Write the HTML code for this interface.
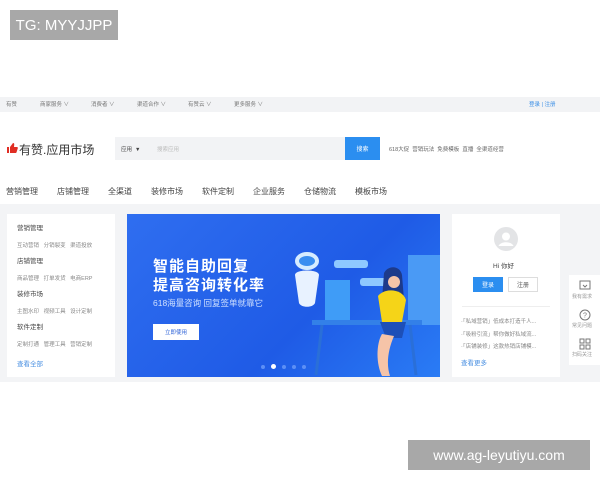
<!DOCTYPE html>
<html><head><meta charset="utf-8"><style>
*{margin:0;padding:0;box-sizing:border-box}
body{width:600px;height:480px;background:#fff;position:relative;overflow:hidden;font-family:"Liberation Sans","Noto Sans CJK SC",sans-serif;color:#333}
.a{position:absolute}
.wm{background:#a8a8a8;color:#fff;font-size:15px;display:flex;align-items:center;justify-content:center}
.s{font-size:5.5px;color:#666;white-space:nowrap}
</style></head><body>
<div class="a wm" style="left:10px;top:10px;width:108px;height:30px">TG: MYYJJPP</div>

<div class="a" style="left:0;top:97px;width:600px;height:15px;background:#f2f3f5"></div>
<div class="a s" style="left:6px;top:100px;color:#777">有赞</div>
<div class="a s" style="left:40px;top:100px;color:#777">商家服务 ∨</div>
<div class="a s" style="left:91px;top:100px;color:#777">消费者 ∨</div>
<div class="a s" style="left:137px;top:100px;color:#777">渠道合作 ∨</div>
<div class="a s" style="left:188px;top:100px;color:#777">有赞云 ∨</div>
<div class="a s" style="left:234px;top:100px;color:#777">更多服务 ∨</div>
<div class="a s" style="left:529px;top:100px;color:#3a8ee6">登录 | 注册</div>

<svg class="a" style="left:6px;top:142px" width="12" height="12" viewBox="0 0 12 12"><path d="M1 5h2v6H1zM4 5l3-4c1 0 1.5.6 1.2 2L8 5h3c.6 0 1 .6.8 1.2l-1.3 4.2c-.2.4-.5.6-1 .6H4z" fill="#e02e24"/></svg>
<div class="a" style="left:19px;top:141px;font-size:12px;color:#333">有赞.应用市场</div>
<div class="a" style="left:115px;top:137px;width:230px;height:23px;background:#f2f3f5"></div>
<div class="a s" style="left:121px;top:145px;color:#444">应用 &nbsp;▼</div>
<div class="a s" style="left:157px;top:145px;color:#bbb">搜索应用</div>
<div class="a" style="left:345px;top:137px;width:35px;height:23px;background:#2b8ef0;color:#fff;font-size:6px;display:flex;align-items:center;justify-content:center">搜索</div>
<div class="a s" style="left:389px;top:145px">618大促 &nbsp;营销玩法 &nbsp;免费模板 &nbsp;直播 &nbsp;全渠道经营</div>

<div class="a" style="left:6px;top:186px;font-size:8px;color:#444;white-space:nowrap">营销管理<span style="margin-left:19px">店铺管理</span><span style="margin-left:19px">全渠道</span><span style="margin-left:19px">装修市场</span><span style="margin-left:19px">软件定制</span><span style="margin-left:19px">企业服务</span><span style="margin-left:19px">仓储物流</span><span style="margin-left:19px">模板市场</span></div>

<div class="a" style="left:0;top:204px;width:600px;height:178px;background:#f3f4f6"></div>
<div class="a" style="left:7px;top:214px;width:108px;height:163px;background:#fff"></div>
<div class="a" style="left:17px;top:226px;font-size:6.5px;color:#444;line-height:1">营销管理</div>
<div class="a s" style="left:17px;top:241px;color:#888">互动营销 &nbsp;&nbsp;分销裂变 &nbsp;&nbsp;渠道投放</div>
<div class="a" style="left:17px;top:259px;font-size:6.5px;color:#444;line-height:1">店铺管理</div>
<div class="a s" style="left:17px;top:274px;color:#888">商品管理 &nbsp;&nbsp;打单发货 &nbsp;&nbsp;电商ERP</div>
<div class="a" style="left:17px;top:292px;font-size:6.5px;color:#444;line-height:1">装修市场</div>
<div class="a s" style="left:17px;top:307px;color:#888">主图水印 &nbsp;&nbsp;视频工具 &nbsp;&nbsp;设计定制</div>
<div class="a" style="left:17px;top:325px;font-size:6.5px;color:#444;line-height:1">软件定制</div>
<div class="a s" style="left:17px;top:340px;color:#888">定制打通 &nbsp;&nbsp;管理工具 &nbsp;&nbsp;营销定制</div>
<div class="a" style="left:17px;top:358px;font-size:6.5px;color:#4a90e2">查看全部</div>

<div class="a" style="left:127px;top:214px;width:313px;height:163px;background:linear-gradient(135deg,#2f6ef0,#1f5be6 60%,#2a7cf5)"></div>
<div class="a" style="left:153px;top:257px;font-size:15px;font-weight:bold;color:#fff;line-height:19px;letter-spacing:1px">智能自助回复<br>提高咨询转化率</div>
<div class="a" style="left:153px;top:297px;font-size:8.5px;color:#cfe0ff">618海量咨询 回复签单就靠它</div>
<div class="a" style="left:153px;top:324px;width:46px;height:16px;background:#fff;color:#2a5fd6;font-size:5.5px;display:flex;align-items:center;justify-content:center">立即使用</div>
<div class="a" style="left:261px;top:365px;width:4px;height:4px;border-radius:50%;background:#5d8ff5"></div>
<div class="a" style="left:271px;top:364px;width:5px;height:5px;border-radius:50%;background:#fff"></div>
<div class="a" style="left:282px;top:365px;width:4px;height:4px;border-radius:50%;background:#5d8ff5"></div>
<div class="a" style="left:292px;top:365px;width:4px;height:4px;border-radius:50%;background:#5d8ff5"></div>
<div class="a" style="left:302px;top:365px;width:4px;height:4px;border-radius:50%;background:#5d8ff5"></div>
<svg class="a" style="left:290px;top:250px" width="150" height="127" viewBox="0 0 150 127">
<rect x="118" y="5" width="32" height="70" fill="#4a9af5"/>
<ellipse cx="17" cy="11" rx="12" ry="9" fill="#d6ecff"/><ellipse cx="17" cy="11" rx="8" ry="5" fill="#3a8ef0"/>
<path d="M5 25c0-6 24-6 24 0l-4 28c-2 5-14 5-16 0z" fill="#e8f2ff"/>
<rect x="44" y="10" width="34" height="8" rx="3" fill="#8ec8ff"/>
<rect x="70" y="28" width="34" height="8" rx="3" fill="#8ec8ff"/>
<rect x="35" y="30" width="25" height="40" fill="#3f9cf7"/>
<rect x="22" y="70" width="110" height="5" fill="#3380e8"/>
<path d="M32 75l-6 50M120 75l6 50" stroke="#2a6fd8" stroke-width="3"/>
<path d="M94 23c4-8 16-8 18 2l2 25h-22z" fill="#1d3a8a"/>
<circle cx="104" cy="32" r="6" fill="#f6c4a8"/>
<path d="M88 46c6-8 24-8 28 4l-4 22H92z" fill="#f5d418"/>
<path d="M90 72h26l-4 16H96z" fill="#1d4fb8"/>
<path d="M92 84c-6 10-6 30 0 42h8c-4-12-2-26 4-40z" fill="#f6c4a8"/>
</svg>

<div class="a" style="left:452px;top:214px;width:108px;height:163px;background:#fff"></div>
<svg class="a" style="left:494px;top:227px" width="24" height="24" viewBox="0 0 24 24"><circle cx="12" cy="12" r="12" fill="#e3e4e6"/><circle cx="12" cy="9.5" r="4" fill="#fff"/><path d="M4.5 19c2-5 13-5 15 0" fill="#fff"/></svg>
<div class="a" style="left:493px;top:260px;font-size:6.5px;color:#444">Hi 你好</div>
<div class="a" style="left:473px;top:277px;width:30px;height:15px;background:#2b8ef0;color:#fff;font-size:6px;display:flex;align-items:center;justify-content:center">登录</div>
<div class="a" style="left:508px;top:277px;width:30px;height:15px;border:1px solid #ddd;color:#555;font-size:6px;display:flex;align-items:center;justify-content:center">注册</div>
<div class="a" style="left:462px;top:306px;width:88px;height:1px;background:#eee"></div>
<div class="a s" style="left:461px;top:316px;color:#888;line-height:12.5px">·「私域营销」低成本打造千人...<br>·「吸粉引流」帮你做好私域流...<br>·「店铺装修」这款热销店铺模...</div>
<div class="a" style="left:461px;top:357px;font-size:6.5px;color:#4a90e2">查看更多</div>

<div class="a" style="left:569px;top:275px;width:31px;height:90px;background:#fff"></div>
<svg class="a" style="left:579px;top:280px" width="12" height="11" viewBox="0 0 12 11"><rect x="1" y="1" width="10" height="8" fill="none" stroke="#777"/><path d="M4 5l2 2 2-2" stroke="#777" fill="none"/></svg>
<div class="a s" style="left:572px;top:293px;color:#999;font-size:5px">我有需求</div>
<svg class="a" style="left:579px;top:309px" width="12" height="12" viewBox="0 0 12 12"><circle cx="6" cy="6" r="5" fill="none" stroke="#777"/><text x="6" y="8.5" font-size="7" text-anchor="middle" fill="#777" font-family="Liberation Sans">?</text></svg>
<div class="a s" style="left:572px;top:322px;color:#999;font-size:5px">常见问题</div>
<svg class="a" style="left:579px;top:338px" width="12" height="12" viewBox="0 0 12 12" fill="none" stroke="#777"><rect x="1" y="1" width="4" height="4"/><rect x="7" y="1" width="4" height="4"/><rect x="1" y="7" width="4" height="4"/><path d="M7 7h4v4H7z"/></svg>
<div class="a s" style="left:572px;top:351px;color:#999;font-size:5px">扫码关注</div>

<div class="a wm" style="left:408px;top:440px;width:182px;height:30px;font-size:14px">www.ag-leyutiyu.com</div>
</body></html>
